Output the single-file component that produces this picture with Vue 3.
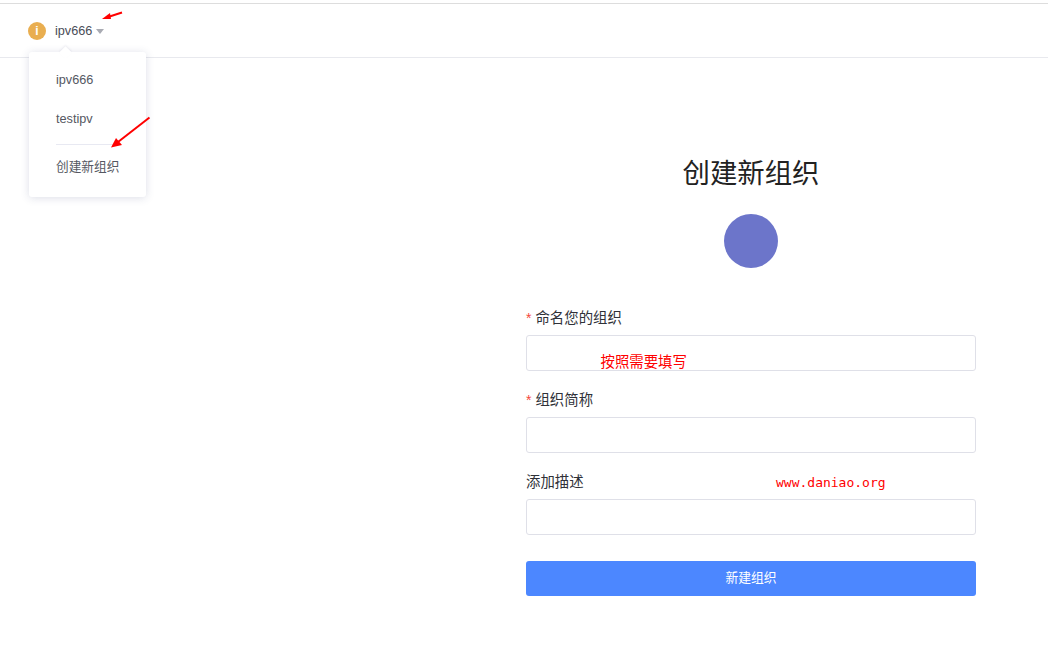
<script setup>
const fields = [
  { label: '命名您的组织', required: true },
  { label: '组织简称', required: true },
  { label: '添加描述', required: false },
]
const orgs = ['ipv666', 'testipv']
</script>

<template>
  <div class="page">
    <header class="topbar">
      <div class="org-switch">
        <span class="org-badge">i</span>
        <span class="org-name">ipv666</span>
        <span class="caret"></span>
      </div>
      <div class="menu">
        <span class="menu-tip"></span>
        <div v-for="o in orgs" :key="o" class="menu-item">{{ o }}</div>
        <div class="menu-divider"></div>
        <div class="menu-item menu-create">创建新组织</div>
      </div>
    </header>

    <main class="content">
      <form class="org-form" @submit.prevent>
        <h1 class="title">创建新组织</h1>
        <div class="avatar"></div>
        <div v-for="f in fields" :key="f.label" class="field">
          <label class="label"><span v-if="f.required" class="star">*</span>{{ f.label }}</label>
          <input class="input" type="text" />
        </div>
        <button class="submit" type="button">新建组织</button>
      </form>
    </main>

    <svg class="marks" width="1048" height="663" viewBox="0 0 1048 663" fill="none">
      <path d="M122 12.500 L108 17" stroke="#f00" stroke-width="2" />
      <path d="M102 19 L110 13 L111 19 Z" fill="#f00" />
      <path d="M149.500 117.500 L118 142" stroke="#f00" stroke-width="2" />
      <path d="M111 147.500 L116 138 L122 145 Z" fill="#f00" />
    </svg>
    <span class="note note-cn">按照需要填写</span>
    <span class="note note-url">www.daniao.org</span>
  </div>
</template>

<style>
html, body { margin: 0; background: #fff; }
</style>

<style scoped>
.page {
  position: relative;
  width: 1048px;
  height: 663px;
  overflow: hidden;
  background: #fff;
  font-family: "Liberation Sans", "Noto Sans CJK SC", sans-serif;
  font-size: 13px;
  color: #262626;
}
.topbar {
  position: relative;
  box-sizing: border-box;
  height: 55px;
  margin-top: 3px;
  border-top: 1px solid #dddddd;
  border-bottom: 1px solid #e8e9ee;
  padding-left: 28px;
  display: flex;
  align-items: center;
}
.org-switch {
  display: flex;
  align-items: center;
}
.org-badge {
  width: 18px;
  height: 18px;
  border-radius: 50%;
  background: #e9ae50;
  color: #fff;
  font-size: 12px;
  font-weight: 700;
  line-height: 18px;
  text-align: center;
}
.org-name {
  margin-left: 9px;
  font-size: 12.700px;
  line-height: 18px;
  color: #4a4d57;
}
.caret {
  margin-left: 4px;
  margin-top: 2px;
  width: 0;
  height: 0;
  border-left: 4px solid transparent;
  border-right: 4px solid transparent;
  border-top: 5px solid #a9abb3;
}
.menu {
  position: absolute;
  left: 29px;
  top: 48px;
  box-sizing: border-box;
  width: 117px;
  height: 145px;
  padding: 8px 27px 0;
  background: #fff;
  border-radius: 3px;
  box-shadow: 0 1px 8px rgba(60, 70, 120, 0.18);
  z-index: 2;
}
.menu-tip {
  position: absolute;
  left: 32px;
  top: -4px;
  width: 9px;
  height: 9px;
  background: #fff;
  transform: rotate(45deg);
  box-shadow: -1px -1px 2px rgba(60, 70, 120, 0.08);
}
.menu-item {
  height: 39px;
  line-height: 41px;
  font-size: 12.700px;
  color: #555862;
  white-space: nowrap;
}
.menu-divider {
  height: 1px;
  margin-top: 6px;
  background: #e8e9f2;
}
.menu-create {
  margin-top: 2px;
}
.content {
  padding-left: 526px;
}
.org-form {
  width: 450px;
  display: flex;
  flex-direction: column;
}
.title {
  margin: 96px 0 0;
  height: 38px;
  font-size: 27.400px;
  line-height: 40px;
  font-weight: 400;
  text-align: center;
  color: #222;
}
.avatar {
  width: 54px;
  height: 54px;
  margin: 22px auto 31px;
  border-radius: 50%;
  background: #6c75ca;
}
.field {
  display: flex;
  flex-direction: column;
  margin-bottom: 10px;
}
.label {
  height: 36px;
  line-height: 39px;
  font-size: 14.400px;
  color: #2f3138;
}
.star {
  color: #f5483b;
  font-size: 14px;
  margin-right: 4px;
}
.input {
  box-sizing: border-box;
  height: 36px;
  border: 1px solid #dfe0e8;
  border-radius: 3px;
  outline: none;
  background: #fff;
}
.submit {
  height: 35px;
  margin-top: 16px;
  padding: 0 0 5px;
  border: 0;
  border-radius: 3px;
  background: #4c87ff;
  color: #fff;
  font-family: inherit;
  font-size: 12.800px;
}
.marks {
  position: absolute;
  left: 0;
  top: 0;
  z-index: 3;
  pointer-events: none;
}
.note {
  position: absolute;
  color: #f00;
  white-space: nowrap;
}
.note-cn {
  left: 600.500px;
  top: 352px;
  font-size: 14.400px;
  line-height: 18px;
  font-family: "Noto Sans CJK SC", sans-serif;
}
.note-url {
  left: 776px;
  top: 474px;
  font-size: 13px;
  line-height: 18px;
  font-family: "DejaVu Sans Mono", "Liberation Mono", monospace;
}
</style>
